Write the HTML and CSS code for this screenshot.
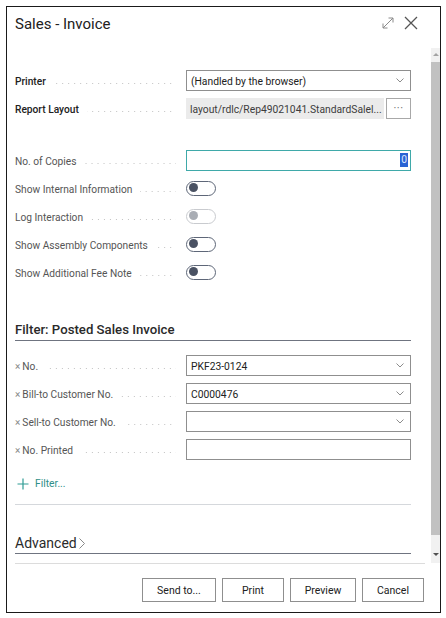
FILE: index.html
```html
<!DOCTYPE html>
<html>
<head>
<meta charset="utf-8">
<link rel="stylesheet" href="styles.css">
</head>
<body>
<div class="dialog">
  <header class="dlg-head">
    <h1 class="title">Sales - Invoice</h1>
    <div class="head-icons">
      <svg class="ico-expand" width="12" height="12" viewBox="0 0 12 12"><path d="M1 11 L11 1 M6.5 1 H11 V5.5 M1 6.5 V11 H5.5" stroke="#8a8a8a" stroke-width="1" fill="none"/></svg>
      <svg class="ico-close" width="14" height="14" viewBox="0 0 14 14"><path d="M1 1 L13 13 M13 1 L1 13" stroke="#555" stroke-width="1.3" fill="none"/></svg>
    </div>
  </header>
  <div class="dlg-body">
    <div class="content">
      <div class="group g1">
        <div class="row">
          <div class="label strong"><span>Printer</span><i class="dots"></i></div>
          <div class="field select"><span>(Handled by the browser)</span><svg width="8" height="5" viewBox="0 0 8 5"><path d="M0.5 0.5 L4 4 L7.5 0.5" stroke="#8c8c8c" fill="none"/></svg></div>
        </div>
        <div class="row">
          <div class="label strong"><span>Report Layout</span><i class="dots"></i></div>
          <div class="field-pair"><div class="readonly"><span>layout/rdlc/Rep49021041.StandardSalel...</span></div><div class="more">···</div></div>
        </div>
      </div>
      <div class="group g2">
        <div class="row">
          <div class="label"><span>No. of Copies</span><i class="dots"></i></div>
          <div class="field focus"><span class="sel">0</span></div>
        </div>
        <div class="row">
          <div class="label"><span>Show Internal Information</span><i class="dots"></i></div>
          <div><span class="toggle"></span></div>
        </div>
        <div class="row">
          <div class="label"><span>Log Interaction</span><i class="dots"></i></div>
          <div><span class="toggle off"></span></div>
        </div>
        <div class="row">
          <div class="label"><span>Show Assembly Components</span><i class="dots"></i></div>
          <div><span class="toggle"></span></div>
        </div>
        <div class="row">
          <div class="label"><span>Show Additional Fee Note</span><i class="dots"></i></div>
          <div><span class="toggle"></span></div>
        </div>
      </div>
      <h2 class="section">Filter: Posted Sales Invoice</h2>
      <div class="group g3">
        <div class="row">
          <div class="label"><span><b class="x">×</b>No.</span><i class="dots"></i></div>
          <div class="field select"><span class="val">PKF23-0124</span><svg width="8" height="5" viewBox="0 0 8 5"><path d="M0.5 0.5 L4 4 L7.5 0.5" stroke="#8c8c8c" fill="none"/></svg></div>
        </div>
        <div class="row">
          <div class="label"><span><b class="x">×</b>Bill-to Customer No.</span><i class="dots"></i></div>
          <div class="field select"><span class="val">C0000476</span><svg width="8" height="5" viewBox="0 0 8 5"><path d="M0.5 0.5 L4 4 L7.5 0.5" stroke="#8c8c8c" fill="none"/></svg></div>
        </div>
        <div class="row">
          <div class="label"><span><b class="x">×</b>Sell-to Customer No.</span><i class="dots"></i></div>
          <div class="field select"><span></span><svg width="8" height="5" viewBox="0 0 8 5"><path d="M0.5 0.5 L4 4 L7.5 0.5" stroke="#8c8c8c" fill="none"/></svg></div>
        </div>
        <div class="row">
          <div class="label"><span><b class="x">×</b>No. Printed</span><i class="dots"></i></div>
          <div class="field"></div>
        </div>
      </div>
      <div class="add-filter"><svg width="12" height="12" viewBox="0 0 12 12"><path d="M6 0.5 V11.5 M0.5 6 H11.5" stroke="#2f9c94" stroke-width="1.2" fill="none"/></svg><span>Filter...</span></div>
      <div class="rule"></div>
      <h2 class="advanced">Advanced<svg width="6" height="11" viewBox="0 0 6 11"><path d="M0.5 0.5 L5.5 5.5 L0.5 10.5" stroke="#8a8a8a" fill="none"/></svg></h2>
    </div>
    <div class="scrollbar">
      <span class="arrow up"></span>
      <span class="thumb"></span>
      <span class="arrow down"></span>
    </div>
  </div>
  <footer class="dlg-foot">
    <div class="foot-line"></div>
    <div class="buttons">
      <button class="btn w74">Send to...</button>
      <button class="btn">Print</button>
      <button class="btn w66">Preview</button>
      <button class="btn">Cancel</button>
    </div>
  </footer>
</div>
</body>
</html>
```
FILE: styles.css
```css
* { box-sizing: border-box; }
html, body { margin: 0; padding: 0; background: #fff; }
body { font-family: Roboto, "Noto Sans", sans-serif; color: #212121; }

.dialog {
  margin: 6px 0 0 6px;
  width: 435px;
  height: 607px;
  border: 1px solid #1a1a1a;
  display: flex;
  flex-direction: column;
  background: #fff;
}

.dlg-head {
  height: 41px;
  flex: none;
  display: flex;
  align-items: flex-start;
  padding: 5px 22px 0 8px;
}
.title {
  margin: 0;
  font-size: 15px;
  line-height: 24px;
  font-weight: 400;
  color: #212121;
}
.head-icons {
  margin-left: auto;
  display: flex;
  align-items: center;
  gap: 10px;
  padding-top: 4px;
}

.dlg-body {
  flex: 1;
  display: flex;
  min-height: 0;
  overflow: hidden;
}
.content {
  flex: 1;
  padding: 18px 20px 0 8px;
  min-width: 0;
}

.row {
  display: grid;
  grid-template-columns: 161px 225px;
  column-gap: 10px;
  height: 28px;
  align-items: center;
}
.label {
  display: flex;
  align-items: center;
  padding-top: 3px;
  font-size: 10.2px;
  color: #555;
  white-space: nowrap;
  min-width: 0;
}
.label.strong { color: #212121; font-weight: 500; }
.dots {
  flex: 1;
  height: 1px;
  margin: 3px 0 0 8px;
  background-image: linear-gradient(to right, #c2c2c2 1px, transparent 1px);
  background-size: 6px 1px;
  background-repeat: repeat-x;
  background-position: right;
}
.x { font-weight: 400; color: #8a8a8a; margin-right: 2px; font-size: 10px; }

.field {
  height: 21px;
  border: 1px solid #8f8f8f;
  display: flex;
  align-items: center;
  padding: 2px 6px 0 4px;
  font-size: 10.3px;
  color: #212121;
  min-width: 0;
}
.field.select { justify-content: space-between; }
.field.select svg { margin-top: -2px; }
.field.focus { border-color: #3fa9a9; justify-content: flex-end; padding: 0 2px 0 0; }
.sel {
  background: #2a63d4;
  color: #dfe8ff;
  line-height: 14px;
  padding: 0 1px;
}
.field-pair { display: flex; gap: 2px; height: 21px; min-width: 0; }
.readonly {
  flex: 1;
  min-width: 0;
  overflow: hidden;
  background: #ebebeb;
  display: flex;
  align-items: center;
  padding: 2px 0 0 4px;
  font-size: 10.3px;
  color: #3c3c3c;
  white-space: nowrap;
}
.more {
  width: 25px;
  flex: none;
  border: 1px solid #a8a8a8;
  display: flex;
  align-items: center;
  justify-content: center;
  color: #666;
  font-size: 11px;
  letter-spacing: 0.5px;
}

.toggle {
  display: block;
  width: 30px;
  height: 15px;
  border: 1.3px solid #5e6778;
  border-radius: 8px;
  position: relative;
}
.toggle::before {
  content: "";
  position: absolute;
  left: 2px;
  top: 1.5px;
  width: 9px;
  height: 9px;
  border-radius: 50%;
  background: #4a5263;
}
.toggle.off { border-color: #c9cbcf; }
.toggle.off::before { background: #a9adb4; }

.g2 { margin-top: 24px; }

.section {
  margin: 34px 0 0;
  height: 21px;
  font-size: 13.2px;
  line-height: 20px;
  font-weight: 500;
  color: #2a2a2a;
  border-bottom: 1px solid #6f7480;
}
.g3 { margin-top: 10px; }

.add-filter {
  margin-top: 6px;
  height: 28px;
  display: flex;
  align-items: center;
  gap: 6px;
  padding: 1px 0 0 2px;
  color: #2f8f89;
  font-size: 10.3px;
}
.rule {
  margin-top: 7px;
  height: 1px;
  background: #d5d8dc;
}
.advanced {
  margin: 27px 0 0;
  height: 22px;
  font-size: 14px;
  line-height: 20px;
  font-weight: 400;
  color: #2a2a2a;
  border-bottom: 1px solid #6f7480;
  display: flex;
  align-items: flex-start;
  padding-top: 1px;
}
.advanced svg { margin: 5px 0 0 2px; }

.scrollbar {
  width: 9px;
  flex: none;
  background: #f1f1f1;
  display: flex;
  flex-direction: column;
  align-items: center;
  padding: 5px 0 7px;
}
.arrow { width: 0; height: 0; border-left: 3px solid transparent; border-right: 3px solid transparent; }
.arrow.up { border-bottom: 3px solid #a3a3a3; }
.arrow.down { border-top: 3px solid #505050; margin-top: auto; }
.thumb {
  margin-top: 6px;
  width: 9px;
  height: 473px;
  background: #c1c1c1;
}

.dlg-foot { flex: none; height: 49px; }
.foot-line { height: 1px; background: #dcdcdc; margin: 0 15px 0 8px; }
.buttons {
  display: flex;
  justify-content: flex-end;
  gap: 6px;
  padding: 14px 16px 0 0;
}
.btn {
  height: 24px;
  width: 62px;
  border: 1px solid #8f8f8f;
  background: #fff;
  font-family: inherit;
  font-size: 10.5px;
  color: #212121;
  padding: 1px 0 0;
}
.btn.w74 { width: 74px; }
.btn.w66 { width: 66px; }
```
